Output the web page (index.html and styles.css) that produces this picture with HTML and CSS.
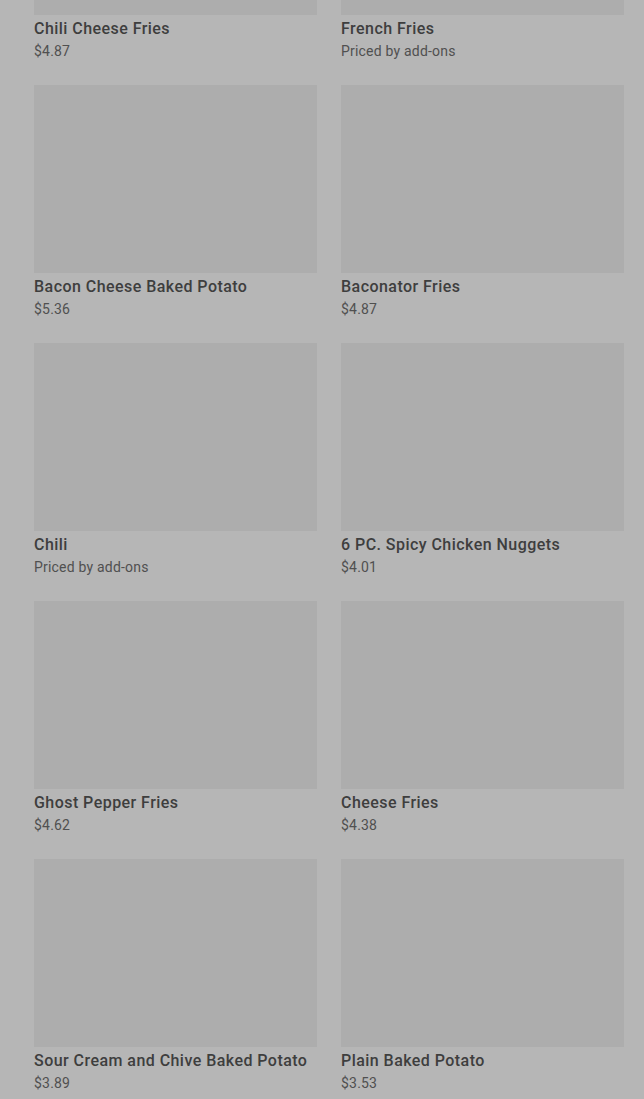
FILE: index.html
```html
<!DOCTYPE html>
<html lang="en">
<head>
  <meta charset="UTF-8" />
  <meta name="viewport" content="width=device-width, initial-scale=1.0" />
  <title>Sides</title>
  <link rel="stylesheet" href="styles.css">
</head>
<body>
  <div class="menu">
    <div class="grid">
      <div class="item">
        <div class="thumb"></div>
        <div class="name">Chili Cheese Fries</div>
        <div class="price">$4.87</div>
      </div>
      <div class="item">
        <div class="thumb"></div>
        <div class="name">French Fries</div>
        <div class="price">Priced by add-ons</div>
      </div>
      <div class="item">
        <div class="thumb"></div>
        <div class="name">Bacon Cheese Baked Potato</div>
        <div class="price">$5.36</div>
      </div>
      <div class="item">
        <div class="thumb"></div>
        <div class="name">Baconator Fries</div>
        <div class="price">$4.87</div>
      </div>
      <div class="item">
        <div class="thumb"></div>
        <div class="name">Chili</div>
        <div class="price">Priced by add-ons</div>
      </div>
      <div class="item">
        <div class="thumb"></div>
        <div class="name">6 PC. Spicy Chicken Nuggets</div>
        <div class="price">$4.01</div>
      </div>
      <div class="item">
        <div class="thumb"></div>
        <div class="name">Ghost Pepper Fries</div>
        <div class="price">$4.62</div>
      </div>
      <div class="item">
        <div class="thumb"></div>
        <div class="name">Cheese Fries</div>
        <div class="price">$4.38</div>
      </div>
      <div class="item">
        <div class="thumb"></div>
        <div class="name">Sour Cream and Chive Baked Potato</div>
        <div class="price">$3.89</div>
      </div>
      <div class="item">
        <div class="thumb"></div>
        <div class="name">Plain Baked Potato</div>
        <div class="price">$3.53</div>
      </div>
    </div>
  </div>
</body>
</html>
```

FILE: styles.css
```css
* {
  margin: 0;
  padding: 0;
  box-sizing: border-box;
}

html, body {
  background: #b6b6b6;
  font-family: Roboto, "Liberation Sans", sans-serif;
  overflow: hidden;
}

/* page is scrolled: first row sits mostly above the fold */
.menu {
  margin-top: -173px;
  padding: 0 20px 0 34px;
}

.grid {
  display: grid;
  grid-template-columns: 283px 283px;
  column-gap: 24px;
  row-gap: 24px;
}

.thumb {
  height: 188px;
  background: #adadad;
}

.name {
  margin-top: 4px;
  font-size: 16px;
  line-height: 20px;
  font-weight: 500;
  letter-spacing: 0.45px;
  color: #3e3e3e;
}

.price {
  margin-top: 2px;
  font-size: 14px;
  line-height: 20px;
  letter-spacing: 0.2px;
  color: #505050;
}
```
